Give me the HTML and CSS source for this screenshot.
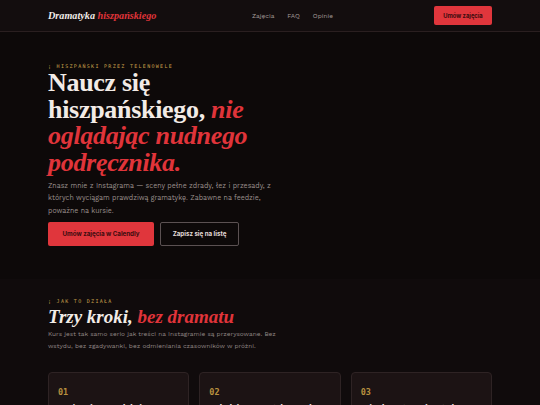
FILE: index.html
```html
<!DOCTYPE html>
<html lang="pl">
<head>
<meta charset="utf-8">
<title>Dramatyka hiszpańskiego</title>
<link rel="stylesheet" href="styles.css">
</head>
<body>
<header class="site-header">
  <div class="container header-inner">
    <a class="logo" href="#">Dramatyka <span class="accent">hiszpańskiego</span></a>
    <nav class="nav">
      <a href="#">Zajęcia</a>
      <a href="#">FAQ</a>
      <a href="#">Opinie</a>
    </nav>
    <a class="btn btn-primary btn-small" href="#">Umów zajęcia</a>
  </div>
</header>
<main>
  <section class="hero">
    <div class="container">
      <p class="eyebrow">¡ HISZPAŃSKI PRZEZ TELENOWELE</p>
      <h1 class="hero-title">Naucz się<br>hiszpańskiego, <em>nie<br>oglądając nudnego<br>podręcznika.</em></h1>
      <p class="hero-text">Znasz mnie z Instagrama — sceny pełne zdrady, łez i przesady, z których wyciągam prawdziwą gramatykę. Zabawne na feedzie, poważne na kursie.</p>
      <div class="actions">
        <a class="btn btn-primary" href="#">Umów zajęcia w Calendly</a>
        <a class="btn btn-outline" href="#">Zapisz się na listę</a>
      </div>
    </div>
  </section>
  <section class="steps">
    <div class="container">
      <p class="eyebrow">¡ JAK TO DZIAŁA</p>
      <h2 class="section-title">Trzy kroki, <em>bez dramatu</em></h2>
      <p class="section-text">Kurs jest tak samo serio jak treści na Instagramie są przerysowane. Bez wstydu, bez zgadywanki, bez odmieniania czasowników w próżni.</p>
      <div class="cards">
        <div class="card"><span class="num">01</span><h3>Umów pierwszą lekcję</h3></div>
        <div class="card"><span class="num">02</span><h3>Oglądaj sceny z telenowel</h3></div>
        <div class="card"><span class="num">03</span><h3>Mów bez stresu i wstydu</h3></div>
      </div>
    </div>
  </section>
</main>
</body>
</html>
```
FILE: styles.css
```css
* { box-sizing: border-box; }
html, body { margin: 0; padding: 0; }
body {
  background: #100b0c;
  color: #e9e2df;
  font-family: "Work Sans", Inter, "Open Sans", sans-serif;
}
a { text-decoration: none; color: inherit; }
.container { width: 444px; margin: 0 auto; }

.site-header {
  background: #130d0e;
  border-bottom: 1px solid #2a1f20;
}
.header-inner {
  height: 31px;
  display: flex;
  align-items: center;
}
.logo {
  font-family: "Liberation Serif", "DejaVu Serif", serif;
  font-style: italic;
  font-weight: 700;
  font-size: 10.2px;
  color: #f1ebe8;
}
.accent { color: #e0343a; }
.nav {
  margin-left: auto;
  display: flex;
  gap: 13px;
  margin-right: 101px;
}
.nav a {
  font-size: 6.5px;
  color: #a49c99;
}

.btn {
  display: inline-flex;
  align-items: center;
  justify-content: center;
  white-space: nowrap;
  font-family: Inter, "Open Sans", sans-serif;
  font-weight: 700;
  font-size: 6.2px;
  border-radius: 2px;
  height: 24px;
  padding: 0 8px;
}
.btn-primary {
  background: #e0363c;
  color: #3a0b0e;
}
.btn-small {
  height: 19px;
  width: 58px;
  padding: 0;
  font-size: 5.8px;
}
.btn-outline {
  border: 1px solid #5b5152;
  color: #e4dcd9;
}

.hero {
  background: #0d0909;
  padding: 31px 0 33px;
}
.eyebrow {
  margin: 0;
  font-family: "DejaVu Sans Mono", "Liberation Mono", monospace;
  font-size: 5px;
  letter-spacing: 1.3px;
  color: #caa24c;
}
.hero-title {
  margin: 1px 0 0;
  font-family: "Liberation Serif", "DejaVu Serif", serif;
  font-weight: 700;
  font-size: 26px;
  line-height: 26.5px;
  letter-spacing: -0.3px;
  color: #f2ebe6;
}
.hero-title em {
  color: #e0343a;
  font-style: italic;
}
.hero-text {
  margin: 4px 0 0;
  width: 245px;
  font-size: 7px;
  line-height: 12.3px;
  color: #9b908d;
}
.actions {
  display: flex;
  gap: 6px;
  margin-top: 5px;
}
.actions .btn-primary { width: 106px; }
.actions .btn-outline { width: 79px; }

.steps {
  background: #100b0c;
  padding: 19px 0 0;
}
.section-title {
  margin: 2px 0 0;
  font-family: "Liberation Serif", "DejaVu Serif", serif;
  font-style: italic;
  font-weight: 700;
  font-size: 19px;
  line-height: 21px;
  color: #f2ebe6;
}
.section-title em { color: #e0343a; }
.section-text {
  margin: 1px 0 0;
  width: 250px;
  font-size: 6.5px;
  line-height: 12.5px;
  color: #918785;
}
.cards {
  display: grid;
  grid-template-columns: repeat(3, 1fr);
  gap: 10px;
  margin-top: 19px;
}
.card {
  background: #1c1314;
  border: 1px solid #2e2324;
  border-radius: 4px;
  padding: 14px 9px 20px;
  height: 80px;
}
.num {
  display: block;
  font-family: "DejaVu Sans Mono", "Liberation Mono", monospace;
  font-weight: 700;
  font-size: 8.5px;
  color: #b8903f;
}
.card h3 {
  margin: 6px 0 0;
  font-size: 8px;
  color: #eee6e2;
}
```
